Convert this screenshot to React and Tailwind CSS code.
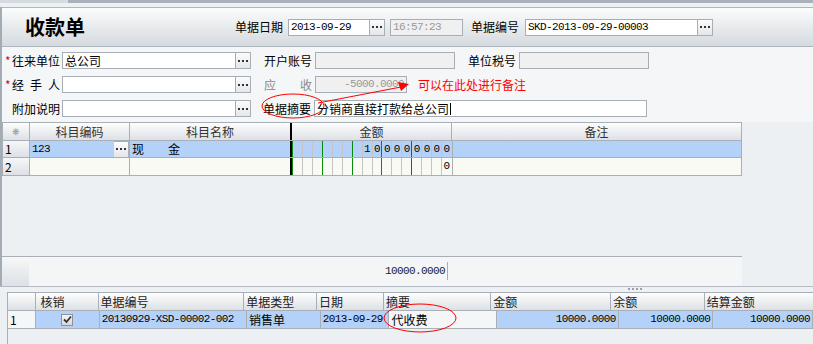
import React from "react"

const cnFont = "font-['Noto_Sans_CJK_SC','Noto_Sans',sans-serif]"
const monoFont = "font-['Liberation_Mono',monospace] text-[11px] tracking-[-0.6px]"

function Dots() {
  return (
    <div className="w-[15px] h-[17px] border border-l-0 border-[#a8aeb5] bg-gradient-to-b from-[#fbfbfb] to-[#e4e7ea] flex items-center justify-center gap-[2px]">
      <span className="w-[2px] h-[2px] bg-[#333]" />
      <span className="w-[2px] h-[2px] bg-[#333]" />
      <span className="w-[2px] h-[2px] bg-[#333]" />
    </div>
  )
}

function Field({ width, value, disabled, mono, right, grey, children }) {
  return (
    <div
      className={`h-[17px] border border-[#a8aeb5] flex items-center px-[2px] overflow-hidden ${disabled ? "bg-[#f0f0f0]" : "bg-white"} ${right ? "justify-end" : ""}`}
      style={{ width }}
    >
      <span className={`${mono ? monoFont : "text-[12px]"} ${grey ? "text-[#999]" : "text-black"} leading-none whitespace-nowrap`}>{value}</span>
      {children}
    </div>
  )
}

function Label({ star, text, spread, grey }) {
  return (
    <div className="w-[60px] flex items-center pl-[3px] shrink-0">
      <span className="w-[7px] text-red-600 text-[12px] leading-none">{star ? "*" : ""}</span>
      <span className={`w-[48px] flex ${spread ? "justify-between" : ""} text-[12px] leading-none ${grey ? "text-[#888]" : "text-black"}`}>
        {text.split("").map((c, i) => <span key={i}>{c}</span>)}
      </span>
    </div>
  )
}

function SideLabel({ text, spread, grey, ml = "ml-[13px]" }) {
  return (
    <div className={`${ml} w-[51px] shrink-0`}>
      <span className={`w-[48px] flex ${spread ? "justify-between" : ""} text-[12px] leading-none ${grey ? "text-[#888]" : "text-black"}`}>
        {text.split("").map((c, i) => <span key={i}>{c}</span>)}
      </span>
    </div>
  )
}

const amountLines = { 2: "border-r-[#0a8a0a]", 5: "border-r-[#0a8a0a]", 8: "border-r-[#0a8a0a]", 11: "border-r-[#ff0000]" }

function AmountCells({ digits, bg }) {
  const cells = Array.from({ length: 16 }, (_, i) => {
    const d = digits[i - (16 - digits.length)]
    return (
      <div
        key={i}
        className={`w-[10px] h-full flex items-center justify-center border-r ${i === 15 ? "border-r-transparent" : amountLines[i] || "border-r-[#c4c4c4]"} ${monoFont}`}
      >
        {d ?? ""}
      </div>
    )
  })
  return <div className={`w-[160px] h-full flex border-l border-l-[#0a8a0a] ${bg}`}>{cells}</div>
}

const head = "bg-gradient-to-b from-[#fdfdfd] to-[#dde1e5]"
const rowHead = "bg-gradient-to-b from-[#f6f7f8] to-[#dde1e5]"

export default function App() {
  return (
    <div className={`relative w-[813px] h-[344px] overflow-hidden bg-[#edf0f3] ${cnFont} text-[12px] text-black`}>
      {/* top strip */}
      <div className="h-[3px] flex">
        <div className="w-[68px] bg-[#d6dbe0]" />
        <div className="flex-1 bg-[#a9b1ba]" />
      </div>
      <div className="h-[4px] bg-[#eef1f4]" />

      <div className="border-l-2 border-[#a3abb4]">
        {/* header */}
        <div className="h-[40px] border-y border-[#b0b6bd] bg-gradient-to-b from-[#fbfcfc] to-[#d5dadf] flex items-center">
          <div className="w-[233px] pl-[23px] text-[20px] font-bold tracking-[0px] leading-none">收款单</div>
          <span className="w-[53px]">单据日期</span>
          <Field width={82} value="2013-09-29" mono />
          <Dots />
          <div className="ml-[5px]">
            <Field width={73} value="16:57:23" mono disabled grey />
          </div>
          <span className="ml-[8px] w-[54px]">单据编号</span>
          <Field width={173} value="SKD-2013-09-29-00003" mono />
          <Dots />
        </div>

        {/* form */}
        <div className="h-[75px] bg-[#f5f6f8] pt-[5px] flex flex-col gap-[7px]">
          <div className="flex items-center h-[17px]">
            <Label star text="往来单位" />
            <Field width={174} value="总公司" />
            <Dots />
            <SideLabel text="开户账号" />
            <Field width={140} value="" disabled />
            <SideLabel text="单位税号" />
            <Field width={130} value="" disabled />
          </div>
          <div className="flex items-center h-[17px]">
            <Label star text="经手人" spread />
            <Field width={174} value="" />
            <Dots />
            <SideLabel text="应收" spread grey />
            <Field width={92} value="-5000.0000" mono disabled grey right />
            <span className="ml-[11px] text-[#ff0000] text-[12px] leading-none">可以在此处进行备注</span>
          </div>
          <div className="flex items-center h-[17px]">
            <Label text="附加说明" />
            <Field width={174} value="" />
            <Dots />
            <SideLabel text="单据摘要" ml="ml-[12px]" />
            <Field width={333} value="分销商直接打款给总公司">
              <span className="w-px h-[12px] bg-black ml-[1px]" />
            </Field>
          </div>
        </div>

        {/* upper grid area */}
        <div className="h-[164px] flex flex-col">
          <div className="w-[740px] border border-[#a9afb6] bg-[#fafaf4]">
            <div className="h-[18px] flex border-b border-[#a9afb6]">
              <div className={`w-[27px] border-r border-[#a9afb6] ${head} flex items-center justify-center text-[9px] text-[#999]`}>❋</div>
              <div className={`w-[100px] border-r border-[#a9afb6] ${head} flex items-center justify-center text-[#333]`}>科目编码</div>
              <div className={`w-[160px] ${head} flex items-center justify-center text-[#333]`}>科目名称</div>
              <div className="w-[2px] bg-black" />
              <div className={`w-[160px] border-r border-[#a9afb6] ${head} flex items-center justify-center text-[#333]`}>金额</div>
              <div className={`flex-1 ${head} flex items-center justify-center text-[#333]`}>备注</div>
            </div>
            <div className="h-[17px] flex border-b border-[#a9afb6]">
              <div className={`w-[27px] border-r border-[#a9afb6] ${rowHead} flex items-center pl-[2px]`}>1</div>
              <div className="w-[100px] border-r border-[#a9afb6] bg-[#b4d2f9] flex items-center justify-between pl-[2px]">
                <span className={monoFont}>123</span>
                <Dots />
              </div>
              <div className="w-[160px] bg-[#b4d2f9] flex items-center pl-[2px]">
                <span className="w-[36px]">现</span><span>金</span>
              </div>
              <div className="w-[2px] bg-black" />
              <div className="border-r border-[#a9afb6]">
                <AmountCells digits={"100000000".split("")} bg="bg-[#b4d2f9]" />
              </div>
              <div className="flex-1 bg-[#b4d2f9]" />
            </div>
            <div className="h-[17px] flex">
              <div className={`w-[27px] border-r border-[#a9afb6] ${rowHead} flex items-center pl-[2px]`}>2</div>
              <div className="w-[100px] border-r border-[#a9afb6]" />
              <div className="w-[160px]" />
              <div className="w-[2px] bg-black" />
              <div className="border-r border-[#a9afb6]">
                <AmountCells digits={["0"]} bg="bg-[#fafaf4]" />
              </div>
              <div className="flex-1" />
            </div>
          </div>

          <div className="mt-auto w-[740px] h-[30px] border-t border-[#a9afb6] bg-[#f3f5f7] flex">
            <div className={`w-[27px] ${rowHead}`} />
            <div className="w-[418px] flex items-center justify-end pr-[2px]">
              <span className={`${monoFont} text-[#222]`}>10000.0000</span>
            </div>
            <div className="mt-[5px] h-[18px] w-px bg-[#a9afb6]" />
          </div>
        </div>
      </div>

      {/* splitter */}
      <div className="h-[6px] border-t border-[#b5bbc2] bg-[#eef1f4] flex justify-start">
        <div className="ml-[628px] mt-[1px] flex gap-[2px]">
          <span className="w-[2px] h-[2px] bg-[#98a0a8]" />
          <span className="w-[2px] h-[2px] bg-[#98a0a8]" />
          <span className="w-[2px] h-[2px] bg-[#98a0a8]" />
          <span className="w-[2px] h-[2px] bg-[#98a0a8]" />
        </div>
      </div>

      {/* bottom grid */}
      <div className="ml-[7px] h-[60px] border-l border-t border-[#a9afb6] bg-[#edf0f3]">
        <div className="h-[18px] flex border-b border-[#a9afb6] text-[#222]">
          <div className={`w-[28px] border-r border-[#a9afb6] ${head}`} />
          <div className={`w-[64px] border-r border-[#a9afb6] ${head} flex items-center pl-[5px]`}>核销</div>
          <div className={`w-[148px] border-r border-[#a9afb6] ${head} flex items-center pl-[2px]`}>单据编号</div>
          <div className={`w-[74px] border-r border-[#a9afb6] ${head} flex items-center pl-[2px]`}>单据类型</div>
          <div className={`w-[68px] border-r border-[#a9afb6] ${head} flex items-center pl-[2px]`}>日期</div>
          <div className={`w-[109px] border-r border-[#a9afb6] ${head} flex items-center pl-[2px]`}>摘要</div>
          <div className={`w-[122px] border-r border-[#a9afb6] ${head} flex items-center pl-[2px]`}>金额</div>
          <div className={`w-[95px] border-r border-[#a9afb6] ${head} flex items-center pl-[2px]`}>余额</div>
          <div className={`w-[110px] ${head} flex items-center pl-[2px]`}>结算金额</div>
        </div>
        <div className="h-[18px] flex border-b border-[#a9afb6]">
          <div className="w-[28px] border-r border-[#a9afb6] bg-[#f4f6f8] flex items-center pl-[2px]">1</div>
          <div className="w-[64px] border-r border-[#a9afb6] bg-[#b4d2f9] flex items-center justify-center">
            <div className="w-[12px] h-[12px] border border-[#8d9399] bg-gradient-to-b from-[#f4f4f4] to-[#d8d8d8] flex items-center justify-center">
              <svg width="9" height="9" viewBox="0 0 9 9">
                <path d="M1 4.5 L3.5 7 L8 1.5" fill="none" stroke="#333" strokeWidth="1.8" />
              </svg>
            </div>
          </div>
          <div className={`w-[148px] border-r border-[#a9afb6] bg-[#b4d2f9] flex items-center pl-[2px] ${monoFont}`}>20130929-XSD-00002-002</div>
          <div className="w-[74px] border-r border-[#a9afb6] bg-[#b4d2f9] flex items-center pl-[2px]">销售单</div>
          <div className={`w-[68px] border-r border-[#a9afb6] bg-[#b4d2f9] flex items-center pl-[2px] ${monoFont}`}>2013-09-29</div>
          <div className="w-[109px] border-r border-[#a9afb6] bg-[#f4f6f8] flex items-center pl-[3px]">代收费</div>
          <div className={`w-[122px] border-r border-[#a9afb6] bg-[#b4d2f9] flex items-center justify-end pr-[2px] ${monoFont}`}>10000.0000</div>
          <div className={`w-[95px] border-r border-[#a9afb6] bg-[#b4d2f9] flex items-center justify-end pr-[2px] ${monoFont}`}>10000.0000</div>
          <div className={`w-[100px] border-r border-[#a9afb6] bg-[#b4d2f9] flex items-center justify-end pr-[2px] ${monoFont}`}>10000.0000</div>
        </div>
      </div>

      {/* annotations */}
      <svg className="absolute left-0 top-0 pointer-events-none" width="813" height="344">
        <ellipse cx="293" cy="106" rx="31" ry="12" fill="none" stroke="#ff0000" strokeWidth="1" />
        <line x1="318" y1="103" x2="401" y2="87" stroke="#ff0000" strokeWidth="1" />
        <polygon points="409,84 398,82 401,91" fill="#ff0000" />
        <ellipse cx="420" cy="318" rx="36" ry="14" fill="none" stroke="#ff0000" strokeWidth="1" />
      </svg>
    </div>
  )
}
